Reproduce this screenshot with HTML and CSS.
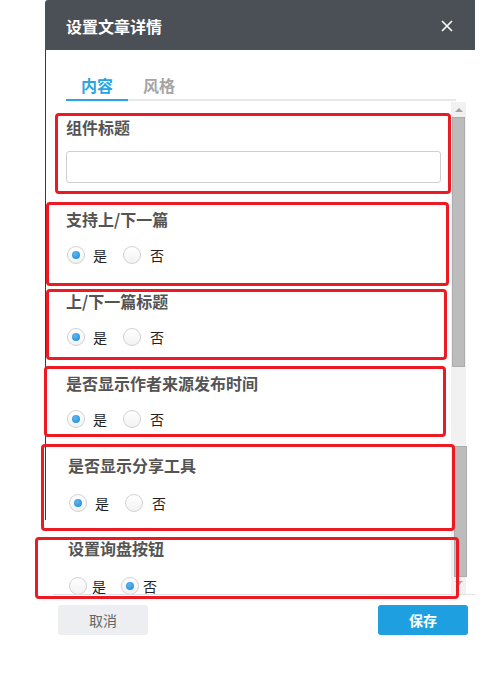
FILE: index.html
```html
<!DOCTYPE html>
<html lang="zh-CN">
<head>
<meta charset="utf-8">
<title>设置文章详情</title>
<link rel="stylesheet" href="styles.css">
</head>
<body>
<div class="dialog">
  <div class="dialog-header">
    <span class="dialog-title">设置文章详情</span>
    <svg class="close" width="12" height="12" viewBox="0 0 12 12"><path d="M1 1L11 11M11 1L1 11" stroke="#fff" stroke-width="1.6" fill="none"/></svg>
  </div>
  <div class="dialog-body">
    <div class="tabs">
      <div class="tab active">内容</div>
      <div class="tab">风格</div>
    </div>
    <div class="scroll">
      <div class="scroll-content">
        <div class="field first">
          <div class="label">组件标题</div>
          <div class="input"></div>
        </div>
        <div class="field">
          <div class="label">支持上/下一篇</div>
          <div class="radios">
            <span class="radio checked"></span><span class="opt">是</span>
            <span class="radio"></span><span class="opt">否</span>
          </div>
        </div>
        <div class="field">
          <div class="label">上/下一篇标题</div>
          <div class="radios">
            <span class="radio checked"></span><span class="opt">是</span>
            <span class="radio"></span><span class="opt">否</span>
          </div>
        </div>
        <div class="field">
          <div class="label">是否显示作者来源发布时间</div>
          <div class="radios">
            <span class="radio checked"></span><span class="opt">是</span>
            <span class="radio"></span><span class="opt">否</span>
          </div>
        </div>
        <div class="field shifted">
          <div class="label">是否显示分享工具</div>
          <div class="radios">
            <span class="radio checked"></span><span class="opt">是</span>
            <span class="radio"></span><span class="opt">否</span>
          </div>
        </div>
        <div class="field shifted">
          <div class="label">设置询盘按钮</div>
          <div class="radios tight">
            <span class="radio"></span><span class="opt">是</span>
            <span class="radio checked"></span><span class="opt">否</span>
          </div>
        </div>
      </div>
      <div class="scrollbar">
        <div class="arrow up"></div>
        <div class="thumb thumb-a"></div>
        <div class="track-gap"></div>
        <div class="thumb thumb-b"></div>
        <div class="arrow down"></div>
      </div>
    </div>
    <div class="footer">
      <button class="btn cancel">取消</button>
      <button class="btn save">保存</button>
    </div>
  </div>
</div>
<div class="mark mark-1"></div>
<div class="mark mark-2"></div>
<div class="mark mark-3"></div>
<div class="mark mark-4"></div>
<div class="mark mark-5"></div>
<div class="mark mark-6"></div>
</body>
</html>
```

FILE: styles.css
```css
* { box-sizing: border-box; }
html, body {
  margin: 0;
  padding: 0;
  background: #fff;
  font-family: "Noto Sans CJK SC", "Noto Sans", "Liberation Sans", sans-serif;
}
body {
  width: 500px;
  height: 688px;
  position: relative;
  overflow: hidden;
}
.dialog {
  margin-left: 45px;
  width: 430px;
}
.dialog-header {
  height: 50px;
  background: #4b4f56;
  display: flex;
  align-items: center;
  justify-content: space-between;
  padding: 2px 22px 0 21px;
  border-top-left-radius: 3px;
}
.dialog-title {
  color: #fff;
  font-size: 16px;
  font-weight: bold;
  line-height: 20px;
}
.close { display: block; }
.dialog-body {
  background: linear-gradient(#3a3a3a, #3a3a3a) no-repeat left top / 1px 470px;
}
.tabs {
  margin-left: 21px;
  width: 390px;
  padding-top: 23px;
  display: flex;
  border-bottom: 2px solid #e8e8e8;
}
.tab {
  width: 62px;
  text-align: center;
  font-size: 16px;
  font-weight: bold;
  line-height: 24px;
  padding-bottom: 2px;
  color: #a5a5a5;
  margin-bottom: -2px;
  border-bottom: 2px solid transparent;
}
.tab.active {
  color: #2aa4e4;
  border-bottom-color: #2aa4e4;
}
.scroll {
  display: flex;
  height: 494px;
  border-bottom: 1px solid #e2e2e2;
  margin-left: 8px;
}
.scroll-content {
  width: 398px;
  overflow: hidden;
  padding-left: 13px;
}
.field { padding-top: 24px; }
.field.first { padding-top: 14px; }
.field.shifted { padding-left: 2px; }
.field.shifted:last-child { padding-top: 23px; }
.label {
  font-size: 16px;
  font-weight: bold;
  line-height: 24px;
  color: #545454;
}
.input {
  margin-top: 12px;
  width: 375px;
  height: 32px;
  border: 1px solid #cfcfcf;
  border-radius: 3px;
  background: #fff;
}
.radios {
  margin-top: 14px;
  height: 20px;
  display: flex;
  align-items: center;
  padding-left: 1px;
}
.field.shifted .radios { margin-top: 16px; }
.radio {
  width: 18px;
  height: 18px;
  border-radius: 50%;
  border: 1px solid #d2d2d2;
  background: linear-gradient(#ffffff, #f2f2f2);
  display: flex;
  align-items: center;
  justify-content: center;
}
.radio.checked::after {
  content: "";
  width: 8px;
  height: 8px;
  border-radius: 50%;
  background: radial-gradient(circle at 40% 35%, #5db8f0, #1a86d6);
}
.opt {
  font-size: 14px;
  color: #222;
  line-height: 20px;
  margin-left: 8px;
  margin-right: 16px;
}
.opt:last-child { margin-left: 9px; }
.radios.tight .opt { margin-left: 5px; margin-right: 15px; }
.radios.tight .opt:last-child { margin-left: 4px; }
.scrollbar {
  width: 15px;
  margin-top: 1px;
  background: #f1f1f1;
  display: flex;
  flex-direction: column;
  align-items: center;
}
.arrow {
  width: 0;
  height: 0;
  border-left: 4px solid transparent;
  border-right: 4px solid transparent;
}
.arrow.up {
  margin-top: 6px;
  border-bottom: 4px solid #a3a3a3;
}
.arrow.down {
  margin-top: 4px;
  border-top: 4px solid #a3a3a3;
}
.thumb {
  width: 13px;
  background: #bcbcbc;
  border: 1px solid #adadad;
}
.thumb-a { margin-top: 5px; height: 250px; }
.track-gap { height: 79px; }
.thumb-b { height: 131px; margin-left: 3px; }
.footer {
  display: flex;
  justify-content: space-between;
  margin-left: 13px;
  width: 410px;
  padding-top: 10px;
}
.btn {
  width: 90px;
  height: 30px;
  border: none;
  border-radius: 3px;
  font-family: inherit;
  font-size: 14px;
  padding: 0;
}
.btn.cancel {
  background: #eceef1;
  color: #666;
}
.btn.save {
  background: #1e9fe0;
  color: #fff;
  font-weight: bold;
}
.mark {
  position: absolute;
  border: 3px solid #ec1a22;
  border-radius: 4px;
}
.mark-1 { left: 55px; top: 113px; width: 396px; height: 81px; }
.mark-2 { left: 46px; top: 202px; width: 403px; height: 84px; }
.mark-3 { left: 46px; top: 289px; width: 401px; height: 71px; }
.mark-4 { left: 44px; top: 366px; width: 402px; height: 71px; }
.mark-5 { left: 41px; top: 444px; width: 414px; height: 87px; }
.mark-6 { left: 35px; top: 537px; width: 424px; height: 62px; }
```
